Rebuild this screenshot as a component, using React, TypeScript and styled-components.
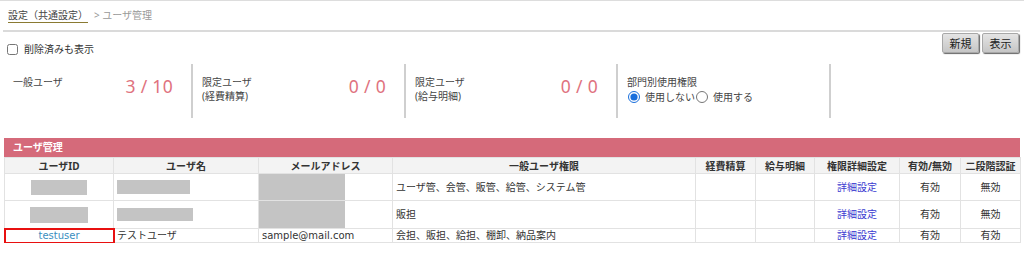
import React from "react";
import styled, { createGlobalStyle } from "styled-components";

const GlobalStyle = createGlobalStyle`
  html, body {
    margin: 0;
    padding: 0;
    background: #fff;
  }
  body {
    font-family: "Noto Sans", "Noto Sans CJK JP", sans-serif;
    font-size: 10px;
    color: #333;
  }
`;

const Page = styled.div`
  border-top: 1px solid #dddddd;
  padding: 0 4px;
  width: 1016px;
`;

const Breadcrumb = styled.div`
  padding: 7px 0 0 4px;
  height: 15px;
  line-height: 14px;
  color: #999;
`;

const CrumbLink = styled.a`
  color: #444;
  text-decoration: underline;
  text-decoration-color: #8a7a32;
  text-underline-offset: 3px;
  margin-right: 6px;
`;

const Divider = styled.div`
  margin-top: 7px;
  border-top: 2px solid #dadada;
  margin-left: -1px;
`;

const Toolbar = styled.div`
  display: flex;
  justify-content: space-between;
  align-items: flex-start;
  height: 24px;
`;

const CheckLabel = styled.label`
  display: flex;
  align-items: center;
  gap: 6px;
  margin-top: 10px;
  line-height: 14px;
  color: #333;

  input {
    margin: 0 0 0 3px;
    width: 11px;
    height: 11px;
  }
`;

const ButtonGroup = styled.div`
  display: flex;
  gap: 3px;
  margin-top: 1px;
  margin-right: 1px;
`;

const GrayButton = styled.button`
  width: 37px;
  height: 20px;
  padding: 0;
  font-family: inherit;
  font-size: 11px;
  color: #222;
  background: linear-gradient(#e4e4e4, #c6c6c6);
  border: 1px solid #a8a8a8;
  border-radius: 2px;
  box-shadow: 1px 1px 1px #666;
`;

const Stats = styled.div`
  display: flex;
  margin-top: 8px;
  height: 54px;
`;

const StatCell = styled.div<{ $w: number; $first?: boolean; $last?: boolean }>`
  box-sizing: border-box;
  width: ${(p) => p.$w}px;
  display: flex;
  justify-content: space-between;
  align-items: flex-start;
  padding: 11px 18px 0 9px;
  border-left: ${(p) => (p.$first ? "none" : "2px solid #cfcfcf")};
  border-right: ${(p) => (p.$last ? "2px solid #cfcfcf" : "none")};
`;

const StatLabel = styled.div`
  line-height: 14px;
  color: #444;
`;

const StatValue = styled.div`
  font-size: 17.5px;
  line-height: 22px;
  color: #e0727e;
  letter-spacing: 0.3px;
`;

const RadioBlock = styled.div`
  display: flex;
  flex-direction: column;
`;

const RadioRow = styled.div`
  display: flex;
  align-items: center;
  margin-top: 1px;
  line-height: 14px;
  color: #444;

  label {
    display: flex;
    align-items: center;
    gap: 5px;
  }

  input {
    margin: 0 0 0 1px;
    width: 12px;
    height: 12px;
    accent-color: #1a6fdc;
  }
`;

const Section = styled.div`
  margin-top: 20px;
`;

const SectionBar = styled.div`
  background: #d56a7a;
  color: #fff;
  font-weight: bold;
  height: 19px;
  line-height: 19px;
  padding-left: 9px;
`;

const Table = styled.table`
  width: 1016px;
  border-collapse: collapse;
  table-layout: fixed;
`;

const Th = styled.th`
  background: #f3f3f3;
  border: 1px solid #e2e2e2;
  font-weight: bold;
  color: #333;
  height: 15px;
  line-height: 14px;
  padding: 0;
  text-align: center;
`;

const Td = styled.td<{ $align?: string; $flush?: boolean; $mark?: boolean }>`
  border: 1px solid #e2e2e2;
  padding: ${(p) => (p.$flush ? "0" : "0 3px")};
  text-align: ${(p) => p.$align || "left"};
  vertical-align: middle;
  line-height: 13px;
  font-family: "DejaVu Sans", "Noto Sans CJK JP", sans-serif;
  color: #333;
  outline: ${(p) => (p.$mark ? "2px solid #e81010" : "none")};
  outline-offset: -1px;
`;

const Redact = styled.div<{ $w: number; $h: number; $center?: boolean }>`
  width: ${(p) => p.$w}px;
  height: ${(p) => p.$h}px;
  background: #c4c4c4;
  margin: ${(p) => (p.$center ? "0 auto" : "0")};
  display: block;
`;

const IdLink = styled.a`
  color: #3a8ec0;
  text-decoration: none;
`;

const DetailLink = styled.a`
  color: #3a3ad0;
  text-decoration: none;
`;

const widths = [109, 145, 134, 303, 60, 59, 85, 61, 60];
const headers = [
  "ユーザID",
  "ユーザ名",
  "メールアドレス",
  "一般ユーザ権限",
  "経費精算",
  "給与明細",
  "権限詳細設定",
  "有効/無効",
  "二段階認証",
];

export default function App() {
  return (
    <Page>
      <GlobalStyle />
      <Breadcrumb>
        <CrumbLink>設定（共通設定）</CrumbLink>&gt; ユーザ管理
      </Breadcrumb>
      <Divider />
      <Toolbar>
        <CheckLabel>
          <input type="checkbox" />
          削除済みも表示
        </CheckLabel>
        <ButtonGroup>
          <GrayButton>新規</GrayButton>
          <GrayButton>表示</GrayButton>
        </ButtonGroup>
      </Toolbar>

      <Stats>
        <StatCell $w={187} $first>
          <StatLabel>一般ユーザ</StatLabel>
          <StatValue>3 / 10</StatValue>
        </StatCell>
        <StatCell $w={213}>
          <StatLabel>
            限定ユーザ
            <br />
            (経費精算)
          </StatLabel>
          <StatValue>0 / 0</StatValue>
        </StatCell>
        <StatCell $w={212}>
          <StatLabel>
            限定ユーザ
            <br />
            (給与明細)
          </StatLabel>
          <StatValue>0 / 0</StatValue>
        </StatCell>
        <StatCell $w={215} $last>
          <RadioBlock>
            <StatLabel>部門別使用権限</StatLabel>
            <RadioRow>
              <label>
                <input type="radio" name="dept" defaultChecked />
                使用しない
              </label>
              <label>
                <input type="radio" name="dept" />
                使用する
              </label>
            </RadioRow>
          </RadioBlock>
        </StatCell>
      </Stats>

      <Section>
        <SectionBar>ユーザ管理</SectionBar>
        <Table>
          <colgroup>
            {widths.map((w, i) => (
              <col key={i} style={{ width: w }} />
            ))}
          </colgroup>
          <thead>
            <tr>
              {headers.map((h) => (
                <Th key={h}>{h}</Th>
              ))}
            </tr>
          </thead>
          <tbody>
            <tr>
              <Td $align="center">
                <Redact $w={56} $h={15} $center />
              </Td>
              <Td>
                <Redact $w={73} $h={14} />
              </Td>
              <Td $flush>
                <Redact $w={86} $h={26} />
              </Td>
              <Td>ユーザ管、会管、販管、給管、システム管</Td>
              <Td />
              <Td />
              <Td $align="center">
                <DetailLink>詳細設定</DetailLink>
              </Td>
              <Td $align="center">有効</Td>
              <Td $align="center">無効</Td>
            </tr>
            <tr>
              <Td $align="center">
                <Redact $w={58} $h={16} $center />
              </Td>
              <Td>
                <Redact $w={76} $h={13} />
              </Td>
              <Td $flush>
                <Redact $w={86} $h={27} />
              </Td>
              <Td>販担</Td>
              <Td />
              <Td />
              <Td $align="center">
                <DetailLink>詳細設定</DetailLink>
              </Td>
              <Td $align="center">有効</Td>
              <Td $align="center">無効</Td>
            </tr>
            <tr>
              <Td $align="center" $mark>
                <IdLink>testuser</IdLink>
              </Td>
              <Td>テストユーザ</Td>
              <Td>sample@mail.com</Td>
              <Td>会担、販担、給担、棚卸、納品案内</Td>
              <Td />
              <Td />
              <Td $align="center">
                <DetailLink>詳細設定</DetailLink>
              </Td>
              <Td $align="center">有効</Td>
              <Td $align="center">有効</Td>
            </tr>
          </tbody>
        </Table>
      </Section>
    </Page>
  );
}
